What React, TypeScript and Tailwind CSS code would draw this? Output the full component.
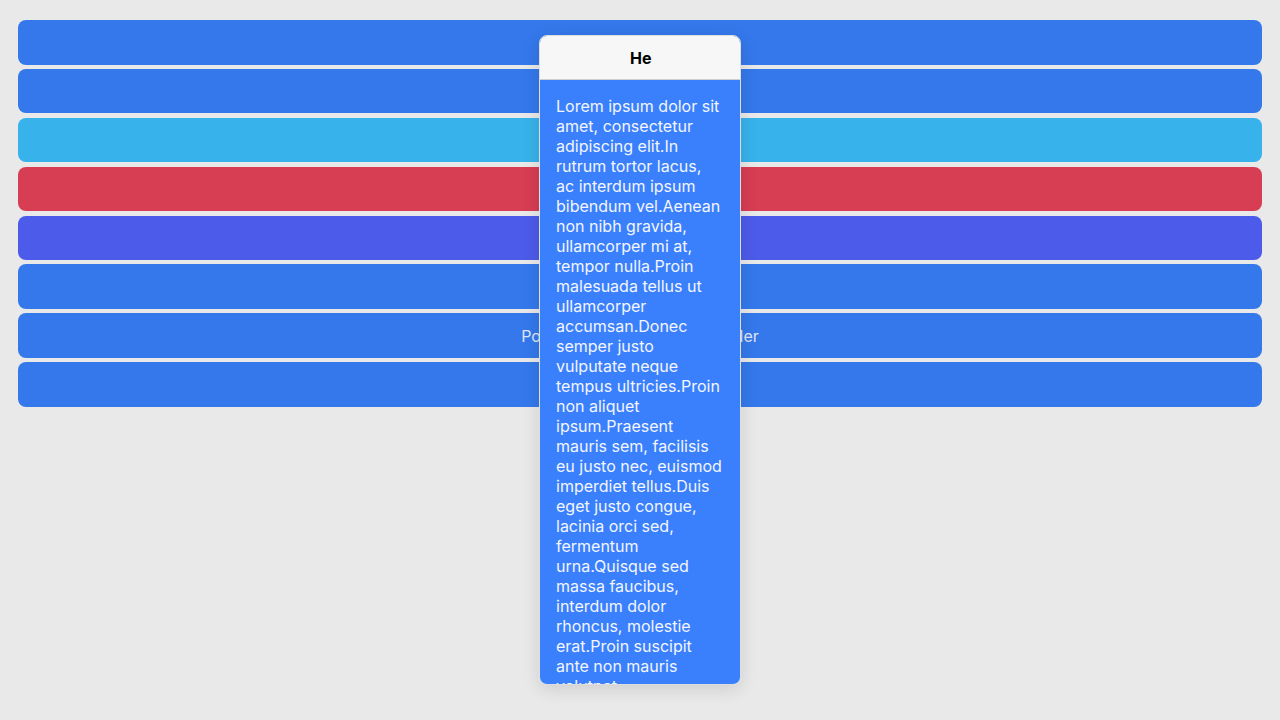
import React from "react";

const bars = [
  { c: "bg-[#3478eb]", t: "" },
  { c: "bg-[#3478eb]", t: "" },
  { c: "bg-[#38b2eb]", t: "" },
  { c: "bg-[#d73d53]", t: "" },
  { c: "bg-[#4c5be9]", t: "" },
  { c: "bg-[#3478eb]", t: "" },
  { c: "bg-[#3478eb]", t: "Popover on bottom with header" },
  { c: "bg-[#3478eb]", t: "" },
];

const body =
  "Lorem ipsum dolor sit amet, consectetur adipiscing elit.In rutrum tortor lacus, ac interdum ipsum bibendum vel.Aenean non nibh gravida, ullamcorper mi at, tempor nulla.Proin malesuada tellus ut ullamcorper accumsan.Donec semper justo vulputate neque tempus ultricies.Proin non aliquet ipsum.Praesent mauris sem, facilisis eu justo nec, euismod imperdiet tellus.Duis eget justo congue, lacinia orci sed, fermentum urna.Quisque sed massa faucibus, interdum dolor rhoncus, molestie erat.Proin suscipit ante non mauris volutpat.";

export default function App() {
  return (
    <div
      className="relative w-[1280px] h-[720px] bg-[#e9e9e9] overflow-hidden"
      style={{ fontFamily: "Inter, 'Noto Sans', sans-serif" }}
    >
      <div className="flex flex-col gap-[4.3px] px-[18px] pt-[20px]">
        {bars.map((b, i) => (
          <div
            key={i}
            className={`${b.c} h-[44.6px] rounded-[8px] flex items-center justify-center text-[16px] text-[#dfe6f5] whitespace-nowrap`}
          >
            {b.t}
          </div>
        ))}
      </div>

      <div className="absolute left-[539px] top-[35px] w-[202px] h-[650px] rounded-[8px] border border-[#dedede] overflow-hidden shadow-[0_4px_18px_rgba(0,0,0,0.12)] flex flex-col">
        <div className="h-[44px] shrink-0 bg-[#f7f7f7] border-b border-[#cfcfcf] flex items-center justify-center">
          <div className="w-[22px] overflow-hidden whitespace-nowrap text-[16px] font-bold text-black ml-[2px]">
            Header
          </div>
        </div>
        <div className="flex-1 bg-[#3a80fd] pl-[16px] pr-[18px] pt-[16px] text-[16px] leading-[20px] text-[#f3f6ff] overflow-hidden">
          {body}
        </div>
      </div>
    </div>
  );
}
